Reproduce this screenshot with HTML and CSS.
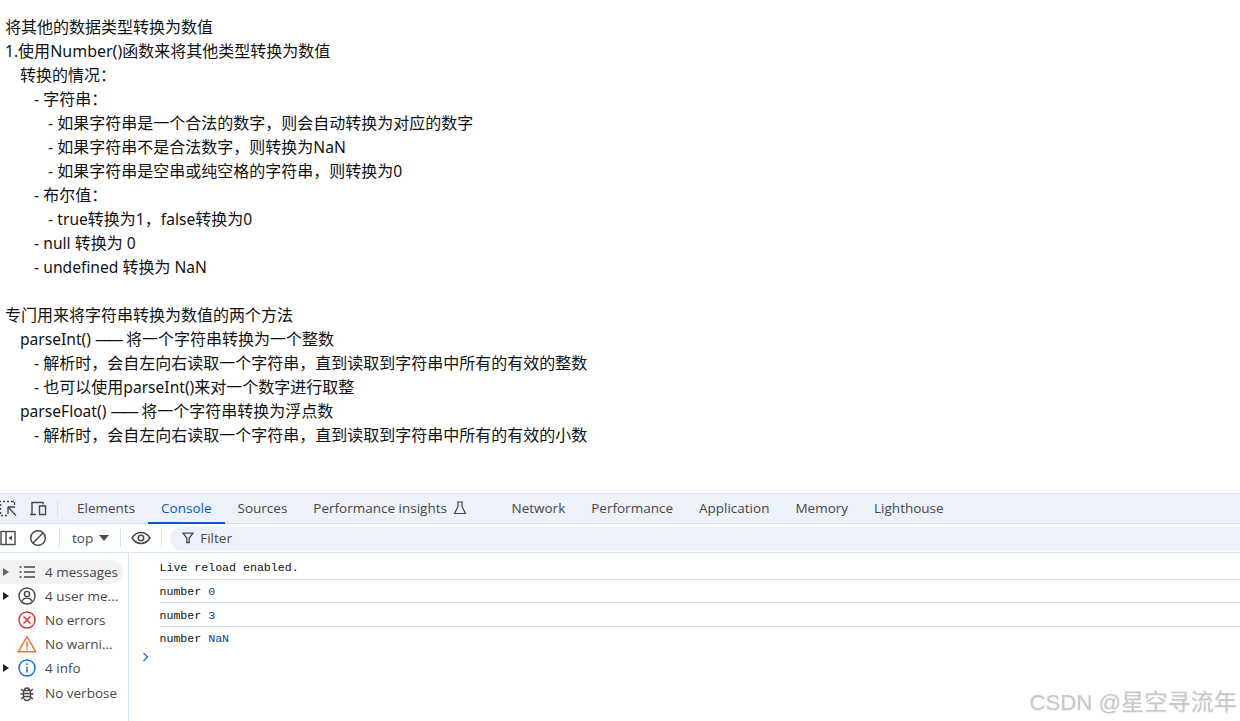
FILE: index.html
```html
<!DOCTYPE html>
<html lang="zh">
<head>
<meta charset="utf-8">
<title>Console</title>
<link rel="stylesheet" href="styles.css">
</head>
<body>
<main class="doc">
  <p>将其他的数据类型转换为数值</p>
  <p><span class="en">1.</span>使用<span class="en wide-en">Number()</span>函数来将其他类型转换为数值</p>
  <p class="l1">转换的情况：</p>
  <p class="l2">- 字符串：</p>
  <p class="l3">- 如果字符串是一个合法的数字，则会自动转换为对应的数字</p>
  <p class="l3">- 如果字符串不是合法数字，则转换为<span class="en">NaN</span></p>
  <p class="l3">- 如果字符串是空串或纯空格的字符串，则转换为<span class="en">0</span></p>
  <p class="l2">- 布尔值：</p>
  <p class="l3">- <span class="en">true</span>转换为<span class="en">1</span>，<span class="en">false</span>转换为<span class="en">0</span></p>
  <p class="l2">- <span class="en">null </span>转换为<span class="en"> 0</span></p>
  <p class="l2">- <span class="en">undefined </span>转换为<span class="en"> NaN</span></p>
  <p class="blank">&nbsp;</p>
  <p>专门用来将字符串转换为数值的两个方法</p>
  <p class="l1"><span class="en">parseInt() </span><span class="dash">——</span> 将一个字符串转换为一个整数</p>
  <p class="l2">- 解析时，会自左向右读取一个字符串，直到读取到字符串中所有的有效的整数</p>
  <p class="l2">- 也可以使用<span class="en">parseInt()</span>来对一个数字进行取整</p>
  <p class="l1"><span class="en">parseFloat() </span><span class="dash">——</span> 将一个字符串转换为浮点数</p>
  <p class="l2">- 解析时，会自左向右读取一个字符串，直到读取到字符串中所有的有效的小数</p>
</main>
<section class="devtools">
  <nav class="tabbar">
    <span class="tool-icons">
      <svg class="ic" width="20" height="20" viewBox="0 0 20 20" fill="none" stroke="#474747" stroke-width="1.4"><path d="M1 2.500h1M4 2.500h2M8 2.500h2M12 2.500h3M15.500 3v3M1.500 5v2M1.500 9v2M1.500 13v2M2 16.500h2M6 16.500h2M9 8h7M9 8v7M9.500 8.500l7.500 8"/></svg>
      <svg class="ic" width="20" height="20" viewBox="0 0 20 20" fill="none" stroke="#474747" stroke-width="1.400"><path d="M2 15.500h6M4 15V3.500h11v2M11.500 7h6v8.500h-6z"/></svg>
    </span>
    <span class="divider"></span>
    <a class="tab">Elements</a>
    <a class="tab active">Console</a>
    <a class="tab">Sources</a>
    <a class="tab flask">Performance insights
      <svg width="14" height="14" viewBox="0 0 14 14" fill="none" stroke="#474747" stroke-width="1.200"><path d="M4 1h6M5 1v4.500L1.500 12.500h11L9 5.500V1"/></svg>
    </a>
    <a class="tab">Network</a>
    <a class="tab">Performance</a>
    <a class="tab">Application</a>
    <a class="tab">Memory</a>
    <a class="tab">Lighthouse</a>
  </nav>
  <div class="filterbar">
    <svg class="sq" width="16" height="16" viewBox="0 0 16 16" fill="none" stroke="#474747" stroke-width="1.400"><rect x="1" y="1.500" width="14" height="13"/><path d="M6 1.500v13"/><path d="M12 5.500v5L8.500 8z" fill="#474747" stroke="none"/></svg>
    <svg class="ban" width="18" height="18" viewBox="0 0 18 18" fill="none" stroke="#474747" stroke-width="1.500"><circle cx="9" cy="9" r="7.300"/><path d="M4 14L14 4"/></svg>
    <span class="divider"></span>
    <span class="ctx">top<i class="caret"></i></span>
    <span class="divider"></span>
    <svg class="eye" width="20" height="14" viewBox="0 0 20 14" fill="none" stroke="#474747" stroke-width="1.500"><path d="M1 7c2.500-3.800 5.500-5.500 9-5.500s6.500 1.700 9 5.500c-2.500 3.800-5.500 5.500-9 5.500S3.500 10.800 1 7z"/><circle cx="10" cy="7" r="2.700"/></svg>
    <span class="divider"></span>
    <div class="filter">
      <svg width="12" height="12" viewBox="0 0 12 12" fill="none" stroke="#474747" stroke-width="1.300"><path d="M1 1.200h10L7.200 6v4.500H4.800V6z"/></svg>
      <span>Filter</span>
    </div>
  </div>
  <div class="console">
    <aside class="sidebar">
      <div class="row selected"><i class="arrow"></i>
        <svg class="ri" width="18" height="18" viewBox="0 0 18 18" fill="none" stroke="#474747" stroke-width="1.500"><path d="M1.500 4h2M6 4h11M1.500 9h2M6 9h11M1.500 14h2M6 14h11"/></svg>
        <span>4 messages</span></div>
      <div class="row"><i class="arrow dark"></i>
        <svg class="ri" width="18" height="18" viewBox="0 0 18 18" fill="none" stroke="#474747" stroke-width="1.400"><circle cx="9" cy="9" r="8"/><circle cx="9" cy="7" r="2.600"/><path d="M3.800 14.500c1-2.600 3-3.400 5.200-3.400s4.200.8 5.200 3.400"/></svg>
        <span>4 user me...</span></div>
      <div class="row"><i class="arrow none"></i>
        <svg class="ri" width="18" height="18" viewBox="0 0 18 18" fill="none" stroke="#dc362e" stroke-width="1.500"><circle cx="9" cy="9" r="8"/><path d="M5.500 5.500l7 7M12.500 5.500l-7 7"/></svg>
        <span>No errors</span></div>
      <div class="row"><i class="arrow none"></i>
        <svg class="ri wide" width="20" height="18" viewBox="0 0 20 18" fill="none" stroke="#e8743b" stroke-width="1.500"><path d="M10 1.500L1.300 16.800h17.400z"/><path d="M10 6.500v6M10 13.500v1.800"/></svg>
        <span>No warni...</span></div>
      <div class="row"><i class="arrow dark"></i>
        <svg class="ri" width="18" height="18" viewBox="0 0 18 18" fill="none" stroke="#1a73e8" stroke-width="1.500"><circle cx="9" cy="9" r="8"/><path d="M9 7.500v6M9 4.300v1.800"/></svg>
        <span>4 info</span></div>
      <div class="row last"><i class="arrow none"></i>
        <svg class="ri" width="18" height="18" viewBox="0 0 18 18" fill="none" stroke="#474747" stroke-width="1.400"><path d="M5.500 6.500h7v6.500a3.500 3.500 0 0 1-7 0zM6.500 6.500a2.500 2.500 0 0 1 5 0M5.500 9.500h7M5.500 12.500h7M5.500 7L3 5M12.500 7L15 5M5.500 10H2.500M12.500 10h3M5.500 13L3 15M12.500 13l2.500 2"/></svg>
        <span>No verbose</span></div>
    </aside>
    <div class="log">
      <div class="msg">Live reload enabled.</div>
      <div class="msg short">number <b>0</b></div>
      <div class="msg tall">number <b>3</b></div>
      <div class="msg plain">number <b>NaN</b></div>
      <svg class="prompt" width="8" height="10" viewBox="0 0 8 10" fill="none" stroke="#1a73e8" stroke-width="1.300"><path d="M1.500 1l4 4-4 4"/></svg>
    </div>
  </div>
</section>
<div class="mark"><span class="mark-en">CSDN @</span>星空寻流年</div>
</body>
</html>
```
FILE: styles.css
```css
* { box-sizing: border-box; }
html, body { margin: 0; height: 721px; overflow: hidden; background: #fff; }
body {
  display: flex;
  flex-direction: column;
  position: relative;
  font-family: "Noto Sans", "Noto Sans CJK SC", sans-serif;
  color: #000;
}
.doc { flex: 1; padding: 15px 0 0 5px; font-size: 16px; line-height: 24px; font-family: "Noto Sans", "Noto Sans CJK SC", sans-serif; color: #111; }
.doc p { margin: 0; height: 24px; white-space: nowrap; }
.l1 { padding-left: 15px; }
.l2 { padding-left: 29px; }
.l3 { padding-left: 43px; }
.en { font-size: 15.600px; }
.wide-en { font-size: 16px; }
.dash { font-size: 15.600px; letter-spacing: -2.700px; margin-right: 1px; }

.devtools { height: 228px; flex: none; display: flex; flex-direction: column; font-family: "Open Sans", "Noto Sans", sans-serif; font-size: 13px; color: #474747; }
.tabbar { height: 31px; flex: none; display: flex; align-items: center; background: #edf1fa; border-top: 1px solid #d3e3fd; border-bottom: 1px solid #d3e3fd; }
.tool-icons { display: flex; align-items: center; gap: 9px; margin-left: -1px; }
.ic { display: block; }
.tabbar .divider { margin: 0 6px 0 9px; }
.divider { display: block; width: 1px; height: 18px; background: #d3e3fd; flex: none; }
.tab { height: 29px; padding-bottom: 2px; display: flex; align-items: center; gap: 6px; padding-left: 13px; padding-right: 13px; white-space: nowrap; position: relative; font-size: 13.500px; }
.tab.active { color: #0b57d0; }
.tab.active::after { content: ""; position: absolute; left: 0; right: 0; bottom: -1px; height: 2px; background: #0b57d0; }
.tab.flask { padding-right: 31.500px; }
.filterbar { height: 29px; flex: none; display: flex; align-items: center; background: #fff; border-bottom: 1px solid #d3e3fd; }
.ban { margin-left: 13px; margin-right: 12px; }
.ctx { display: flex; align-items: center; gap: 6px; margin: 0 11px 0 12px; font-size: 13.500px; }
.caret { width: 0; height: 0; border-left: 5px solid transparent; border-right: 5px solid transparent; border-top: 6px solid #474747; }
.eye { margin: 0 10px 0 10px; }
.filter { flex: 1; height: 23px; margin-left: 8px; background: #edf1fa; border-radius: 12px 0 0 12px; display: flex; align-items: center; gap: 6px; padding-left: 12px; font-size: 13.500px; }
.console { flex: 1; display: flex; min-height: 0; }
.sidebar { width: 129px; flex: none; border-right: 1px solid #d3e3fd; padding-top: 7px; }
.row { height: 24px; width: 123px; display: flex; align-items: center; white-space: nowrap; border-radius: 0 12px 12px 0; font-size: 13.500px; }
.row.last { margin-top: 1px; }
.row.selected { background: #f2f2f2; }
.arrow { width: 0; height: 0; margin-left: 3px; margin-right: 9px; border-top: 4.500px solid transparent; border-bottom: 4.500px solid transparent; border-left: 6px solid #666; }
.arrow.dark { border-left-color: #222; }
.arrow.none { visibility: hidden; }
.ri { margin-right: 9px; flex: none; }
.ri.wide { margin-left: -1px; margin-right: 8px; }
.log { flex: 1; padding: 3px 0 0 30.500px; font-family: "Liberation Mono", monospace; font-size: 11.600px; color: #111; }
.msg { height: 24px; line-height: 23px; border-bottom: 1px solid #d3e3fd; }
.msg.short { height: 23px; }
.msg.tall { padding-top: 1px; }
.msg.plain { border-bottom: 0; }
.msg b { font-weight: 400; color: #0a3a9a; }
.prompt { display: block; margin: 1px 0 0 -18px; }
.mark { position: absolute; right: 3px; top: 687px; font-family: "Liberation Sans", "Noto Sans CJK SC", sans-serif; font-size: 23.200px; line-height: 30px; color: #c8c8c8; white-space: nowrap; text-shadow: 0 1px 1px #eee; }
.mark-en { font-size: 22.200px; }
```
